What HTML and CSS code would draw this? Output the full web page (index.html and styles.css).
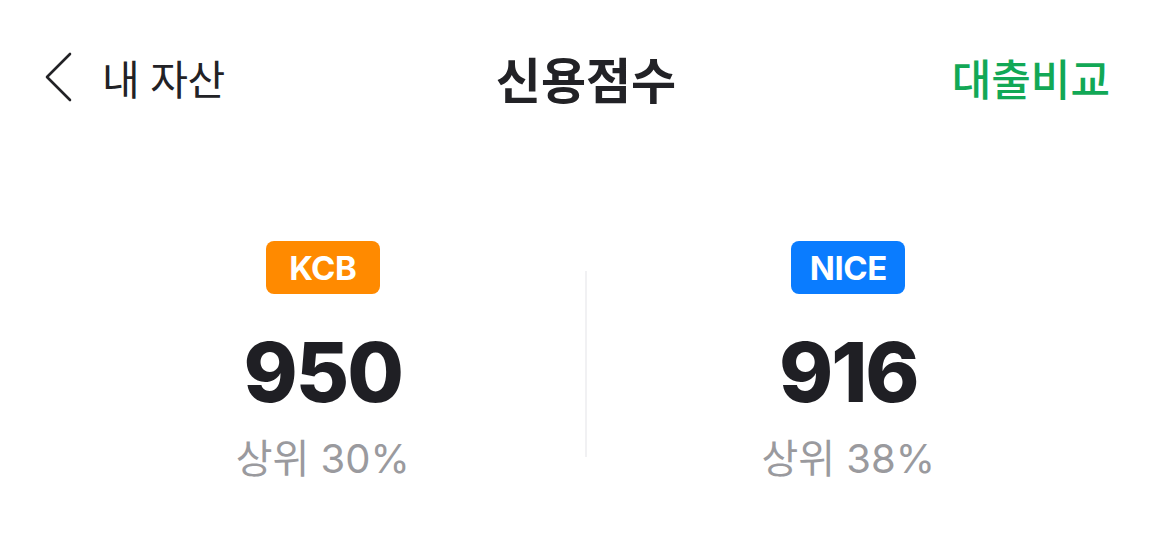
FILE: index.html
```html
<!DOCTYPE html>
<html lang="ko">
<head>
<meta charset="utf-8">
<link rel="stylesheet" href="styles.css">
</head>
<body>
<div class="screen">
  <header class="nav">
    <div class="nav-left">
      <svg class="back" width="30" height="50" viewBox="0 0 30 50"><path d="M26 2 L3 25 L26 48" fill="none" stroke="#222226" stroke-width="2.6" stroke-linecap="round" stroke-linejoin="round"/></svg>
      <span class="back-label">내 자산</span>
    </div>
    <h1 class="title">신용점수</h1>
    <div class="nav-right">대출비교</div>
  </header>
  <main class="scores">
    <section class="col">
      <span class="badge kcb">KCB</span>
      <div class="score">950</div>
      <div class="rank">상위 30%</div>
    </section>
    <div class="divider"></div>
    <section class="col">
      <span class="badge nice">NICE</span>
      <div class="score">916</div>
      <div class="rank">상위 38%</div>
    </section>
  </main>
</div>
</body>
</html>
```
FILE: styles.css
```css
* { box-sizing: border-box; margin: 0; padding: 0; }
html, body { background: #fff; }
body {
  width: 1170px;
  height: 536px;
  overflow: hidden;
  font-family: Inter, "Noto Sans CJK KR", sans-serif;
  color: #1f1f24;
}
.screen { display: flex; flex-direction: column; }
.nav {
  height: 154px;
  display: grid;
  grid-template-columns: 1fr auto 1fr;
  align-items: center;
  padding: 0 60px 0 62px;
}
.nav-left { display: flex; align-items: center; gap: 28px; margin-left: -18px; }
.back { display: block; }
.back-label {
  font-family: "Noto Sans CJK KR", sans-serif;
  font-size: 41px;
  font-weight: 400;
  color: #222226;
  letter-spacing: -0.5px;
}
.title {
  font-family: "Noto Sans CJK KR", sans-serif;
  font-size: 49px;
  font-weight: 700;
  color: #222226;
  letter-spacing: 0;
}
.nav-right {
  justify-self: end;
  font-family: "Noto Sans CJK KR", sans-serif;
  font-size: 43px;
  font-weight: 500;
  color: #12a856;
  letter-spacing: 0;
}
.scores {
  display: grid;
  grid-template-columns: 1fr 2px 1fr;
  padding: 87px 60px 0 61px;
}
.col { display: flex; flex-direction: column; align-items: center; }
.divider {
  background: #f1f1f3;
  margin-top: 30px;
  height: 186px;
}
.badge {
  display: inline-flex;
  align-items: center;
  justify-content: center;
  width: 114px;
  height: 53px;
  border-radius: 8px;
  color: #fff;
  font-size: 33px;
  font-weight: 700;
  letter-spacing: -0.5px;
}
.kcb { background: #ff8a00; }
.nice { background: #0a7cff; }
.score {
  margin-top: 38px;
  font-size: 82px;
  font-weight: 800;
  line-height: 1;
  color: #1f1f24;
  letter-spacing: -2px;
}
.rank {
  margin-top: 23px;
  font-size: 40px;
  font-weight: 400;
  color: #9a9a9e;
  line-height: 1.1;
}
```
